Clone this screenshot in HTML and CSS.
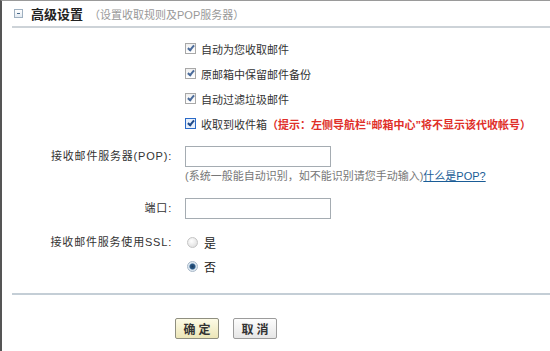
FILE: index.html
```html
<!DOCTYPE html>
<html lang="zh-CN">
<head>
    <meta charset="UTF-8">
    <title>高级设置</title>
    <link rel="stylesheet" href="styles.css">
</head>
<body>
    <div class="panel">
        <div class="panel-head">
            <span class="toggle"></span>
            <h2>高级设置</h2>
            <span class="sub">（设置收取规则及POP服务器）</span>
        </div>

        <div class="options">
            <label class="opt"><span class="cb checked"></span>自动为您收取邮件</label>
            <label class="opt"><span class="cb checked"></span>原邮箱中保留邮件备份</label>
            <label class="opt"><span class="cb checked"></span>自动过滤垃圾邮件</label>
            <label class="opt"><span class="cb checked focus"></span>收取到收件箱<span class="warn">（提示：左侧导航栏“邮箱中心”将不显示该代收帐号）</span></label>
        </div>

        <div class="field">
            <div class="field-label">接收邮件服务器(POP):</div>
            <div class="field-body">
                <input type="text" class="txt">
                <div class="hint">(系统一般能自动识别，如不能识别请您手动输入)<a href="#">什么是POP?</a></div>
            </div>
        </div>

        <div class="field port">
            <div class="field-label">端口:</div>
            <div class="field-body">
                <input type="text" class="txt">
            </div>
        </div>

        <div class="field ssl">
            <div class="field-label">接收邮件服务使用SSL:</div>
            <div class="field-body">
                <label class="radio"><span class="rd"></span>是</label>
                <label class="radio"><span class="rd on"></span>否</label>
            </div>
        </div>

        <div class="sep"></div>

        <div class="actions">
            <button class="btn ok">确定</button>
            <button class="btn">取消</button>
        </div>
    </div>
</body>
</html>
```

FILE: styles.css
```css
body {
    margin: 0;
    background: #fff;
    color: #333;
    font-family: "Liberation Sans", "Noto Sans CJK SC", sans-serif;
    font-size: 11px;
}

.panel {
    height: 351px;
    box-sizing: border-box;
    border-top: 1px solid #9a9a9a;
    border-left: 2px solid #555;
}

.panel-head {
    height: 25px;
    display: flex;
    align-items: center;
    padding-left: 12px;
}

.toggle {
    width: 7px;
    height: 7px;
    border: 1px solid #9fb0c0;
    background: linear-gradient(#fff, #e4ebf2);
    position: relative;
    margin-right: 8px;
}

.toggle::after {
    content: "";
    position: absolute;
    left: 2px;
    right: 2px;
    top: 3px;
    height: 1px;
    background: #4a6a8a;
}

.panel-head h2 {
    margin: 0;
    font-size: 13px;
    font-weight: bold;
    color: #222;
}

.sub {
    color: #999;
    margin-left: 6px;
}

.options {
    margin-left: 10px;
    border-top: 2px solid #cdd3d8;
    padding: 8px 0 0 173px;
}

.opt {
    height: 25px;
    display: flex;
    align-items: center;
    color: #333;
}

.cb {
    width: 9px;
    height: 9px;
    border: 1px solid #a8a8a8;
    background: linear-gradient(#f0f0f0, #fff);
    margin-right: 5px;
    position: relative;
}

.cb.checked::after {
    content: "";
    position: absolute;
    left: 3px;
    top: 0px;
    width: 2px;
    height: 5px;
    border: solid #4a6a9a;
    border-width: 0 2px 2px 0;
    transform: rotate(40deg);
}

.cb.focus {
    border-color: #2a6ac8;
    background: #e8f0fb;
}

.cb.focus::after {
    border-color: #1e4a8a;
}

.warn {
    color: #e0302a;
    font-weight: bold;
}

.field {
    display: flex;
    margin-top: 10px;
}

.field-label {
    text-align: right;
    line-height: 21px;
    padding-right: 13px;
    box-sizing: border-box;
    width: 183px;
    letter-spacing: 0.8px;
    color: #333;
}

.txt {
    width: 146px;
    height: 21px;
    box-sizing: border-box;
    border: 1px solid #a5acb2;
    margin: 0;
    padding: 0 3px;
}

.hint {
    color: #777;
    line-height: 19px;
}

.hint a {
    color: #1a5c96;
    text-decoration: underline;
}

.field.port {
    margin-top: 12px;
}

.field.ssl {
    margin-top: 11px;
}

.field.ssl .field-label {
    line-height: 24px;
}

.radio {
    height: 24px;
    display: flex;
    align-items: center;
    color: #222;
    font-size: 12px;
    padding-left: 2px;
}

.rd {
    width: 9px;
    height: 9px;
    border-radius: 50%;
    border: 1px solid #c4c4c4;
    background: radial-gradient(circle at 40% 35%, #fff, #d8d8d8);
    margin-right: 6px;
    position: relative;
}

.rd.on {
    border-color: #a8b8c8;
    background: radial-gradient(circle, #1e3c60 0, #2a5a88 2.5px, #d8e4ef 3.5px, #f4f7fa 100%);
}

.sep {
    margin: 15px 0 0 10px;
    height: 2px;
    background: #c4ced6;
}

.actions {
    display: flex;
    gap: 14px;
    padding: 23px 0 0 173px;
}

.btn {
    width: 44px;
    height: 21px;
    padding: 0;
    border: 1px solid #9c9c9c;
    border-radius: 2px;
    background: linear-gradient(#fdfdfd, #e6e6e6);
    font-family: inherit;
    font-size: 12px;
    font-weight: bold;
    letter-spacing: 3px;
    text-indent: 3px;
    color: #333;
}

.btn.ok {
    background: linear-gradient(#fdfbe6, #ece6b8);
    border-color: #8f8f80;
}
```
